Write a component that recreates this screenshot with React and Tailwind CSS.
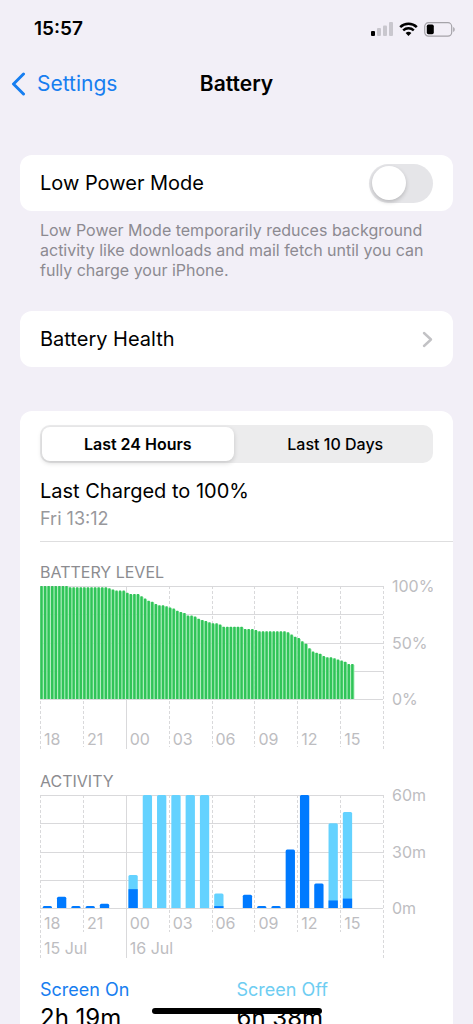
import React, { useState } from 'react';

// battery percentage, one sample every 15 minutes from 18:00
const levels = [
  100, 100, 100, 100, 100, 100, 100, 100, 99, 99, 99, 99, 99, 99, 99, 99, 99, 99, 99, 98, 97, 96, 96, 96,
  94, 93, 93, 93, 91, 89, 87, 86, 84, 83, 83, 82, 81, 80, 78, 77, 76, 74, 74, 73, 71, 70, 69, 68,
  67, 67, 66, 64, 64, 64, 64, 64, 64, 62, 62, 62, 61, 60, 60, 60, 60, 60, 60, 60, 60, 59, 57, 55,
  54, 51, 49, 45, 42, 41, 40, 38, 37, 37, 36, 35, 34, 33, 31, 31,
];

// minutes per hour: [screen on, screen off]
const activity = [
  [1, 0], [6, 0], [1, 0], [1, 0], [2.3, 0], [0, 0], [10, 7.5], [0, 60], [0, 60], [0, 60], [0, 60], [0, 60],
  [1, 6.7], [0, 0], [7, 0], [1, 0], [1, 0], [31, 0], [60, 0], [13, 0], [4, 41], [5, 46],
];

const hours = ['18', '21', '00', '03', '06', '09', '12', '15'];

const PLOT_W = 343;
const PLOT_H = 113;
const TOP = 10;
const BASE = TOP + PLOT_H;
const STEP = PLOT_W / 8;

function Grid({ hourEnd, dayEnd }) {
  return (
    <g stroke="#d9d9db" fill="none">
      {[0, 1, 2, 3, 4].map(i => (
        <line key={i} x1="0" x2={PLOT_W} y1={Math.round(TOP + (PLOT_H * i) / 4) + 0.5} y2={Math.round(TOP + (PLOT_H * i) / 4) + 0.5} />
      ))}
      {[0, 1, 2, 3, 4, 5, 6, 7, 8].map(i => {
        const x = Math.round(i * STEP) + 0.5;
        const edge = i === 0 || i === 2 || i === 8;
        return <line key={i} x1={x} x2={x} y1={TOP} y2={edge ? dayEnd : hourEnd} strokeDasharray={i === 2 ? undefined : '3 2'} />;
      })}
    </g>
  );
}

function AxisText({ labels, hourY }) {
  return (
    <g fill="#bdbdc1">
      {labels.map((l, i) => (
        <text key={l} x="352" y={TOP + 6 + (PLOT_H * i) / 2} fontSize="16">{l}</text>
      ))}
      {hours.map((h, i) => (
        <text key={h} x={i * STEP + 4} y={hourY} fontSize="16">{h}</text>
      ))}
    </g>
  );
}

function LevelChart() {
  const w = PLOT_W / 96;
  return (
    <svg viewBox="0 0 393 174" className="block w-full" role="img" aria-label="Battery level">
      <Grid hourEnd={171} dayEnd={173} />
      {levels.map((v, i) => (
        <g key={i}>
          <rect x={i * w} y={BASE - (v * PLOT_H) / 100 + 1} width={w} height={(v * PLOT_H) / 100 - 1} fill="#a3ecb6" />
          <rect x={i * w + 0.3} y={BASE - (v * PLOT_H) / 100} width={2.4} height={(v * PLOT_H) / 100} rx="0.5" fill="#30c458" />
        </g>
      ))}
      <AxisText labels={['100%', '50%', '0%']} hourY={169} />
    </svg>
  );
}

function ActivityChart() {
  const w = PLOT_W / 24;
  const k = PLOT_H / 60;
  return (
    <svg viewBox="0 0 393 174" className="block w-full" role="img" aria-label="Activity">
      <Grid hourEnd={147} dayEnd={173} />
      {activity.map(([on, off], i) => {
        const h = (on + off) * k;
        const x = i * w + 2.7;
        if (h === 0) return null;
        return (
          <g key={i}>
            <path
              d={`M${x} ${BASE}v${-h + 1.5}q0 -1.5 1.5 -1.5h6.3q1.5 0 1.5 1.5v${h - 1.5}z`}
              fill={off ? '#64d2ff' : '#007aff'}
            />
            {off > 0 && on > 0 && <rect x={x} y={BASE - on * k} width="9.3" height={on * k} fill="#007aff" />}
          </g>
        );
      })}
      <AxisText labels={['60m', '30m', '0m']} hourY={144} />
      <g fill="#bdbdc1" fontSize="16">
        <text x="4" y="169">15 Jul</text>
        <text x={STEP * 2 + 4} y="169">16 Jul</text>
      </g>
    </svg>
  );
}

function StatusBar() {
  return (
    <div className="flex h-14 items-center justify-between pl-[34px] pr-[18px] pt-[2px]">
      <span className="text-[19px] font-semibold">15:57</span>
      <div className="flex items-center gap-[6px]">
        <svg width="22" height="14" viewBox="0 0 22 14">
          <rect x="0" y="9" width="4" height="5" rx="1" fill="#000" />
          <rect x="6" y="6" width="4" height="8" rx="1" fill="#c9c7ce" />
          <rect x="12" y="3.5" width="4" height="10.5" rx="1" fill="#c9c7ce" />
          <rect x="18" y="0" width="4" height="14" rx="1" fill="#c9c7ce" />
        </svg>
        <svg width="19" height="14" viewBox="0 0 19 14" fill="none" stroke="#000">
          <path d="M1.2 5.1a12 12 0 0 1 16.6 0" strokeWidth="2.6" />
          <path d="M4.2 8.4a7.7 7.7 0 0 1 10.6 0" strokeWidth="2.4" />
          <path d="M9.5 14L6.6 11.1a4.2 4.2 0 0 1 5.8 0z" fill="#000" stroke="none" />
        </svg>
        <svg width="31" height="15" viewBox="0 0 31 15">
          <rect x="0.7" y="0.7" width="27" height="13.4" rx="3.8" fill="none" stroke="#a5a3a9" strokeWidth="1.2" />
          <rect x="2.8" y="2.6" width="7" height="9.6" rx="1.6" fill="#000" />
          <path d="M29.2 5v5c1-.4 1.5-1.3 1.5-2.5s-.5-2.1-1.5-2.5z" fill="#a5a3a9" />
        </svg>
      </div>
    </div>
  );
}

export default function App() {
  const [lowPower, setLowPower] = useState(false);
  const [range, setRange] = useState('24h');

  const segment = active =>
    active
      ? 'flex-1 rounded-lg bg-white text-base font-semibold shadow-[0_2px_5px_rgba(0,0,0,0.16)]'
      : 'flex-1 rounded-lg text-base font-medium';

  return (
    <div className="h-screen overflow-y-auto bg-[#f2eff7] font-['Inter',sans-serif] text-black [scrollbar-width:none]">
      <StatusBar />

      <header className="grid h-14 grid-cols-[1fr_auto_1fr] items-center px-[11px]">
        <a href="#settings" className="flex items-center gap-[11px] text-[21px] text-[#177ef0]">
          <svg width="15" height="24" viewBox="0 0 15 24" fill="none" stroke="currentColor" strokeWidth="3" strokeLinecap="round" strokeLinejoin="round">
            <path d="M12.5 2L2.5 12l10 10" />
          </svg>
          Settings
        </a>
        <h1 className="text-[21px] font-semibold">Battery</h1>
      </header>

      <main className="px-5 pt-[43px]">
        <div className="flex h-14 items-center justify-between rounded-xl bg-white px-5">
          <label htmlFor="low-power" className="text-xl">Low Power Mode</label>
          <input
            id="low-power"
            type="checkbox"
            role="switch"
            checked={lowPower}
            onChange={e => setLowPower(e.target.checked)}
            className="flex h-[39px] w-16 appearance-none items-center rounded-full bg-[#e5e5e8] px-[3px] before:size-[34px] before:rounded-full before:bg-white before:shadow-[0_2px_4px_rgba(0,0,0,0.2)] checked:justify-end checked:bg-[#34c759]"
          />
        </div>
        <p className="px-5 pt-[9px] text-base leading-5 text-[#8c8a91]">
          Low Power Mode temporarily reduces background activity like downloads and mail fetch until you can fully charge your iPhone.
        </p>

        <a href="#health" className="mt-[31px] flex h-14 items-center justify-between rounded-xl bg-white px-5 text-xl">
          Battery Health
          <svg width="11" height="17" viewBox="0 0 11 17" fill="none" stroke="#c2c2c5" strokeWidth="2.4" strokeLinecap="round" strokeLinejoin="round">
            <path d="M2 2l7 6.5-7 6.5" />
          </svg>
        </a>

        <section className="mt-11 rounded-t-xl bg-white pl-5 pt-[14px]">
          <div className="mr-5 flex h-[38px] gap-[6px] rounded-[10px] bg-[#ececed] p-[2px]">
            <button type="button" onClick={() => setRange('24h')} className={segment(range === '24h')}>Last 24 Hours</button>
            <button type="button" onClick={() => setRange('10d')} className={segment(range === '10d')}>Last 10 Days</button>
          </div>

          <div className="border-b border-[#dededf] pb-2 pt-[14px]">
            <p className="text-xl">Last Charged to 100%</p>
            <p className="text-lg text-[#98989c]">Fri 13:12</p>
          </div>

          <div className="mr-5 pt-5">
            <h2 className="h-[14px] text-base leading-5 text-[#8c8c90]">BATTERY LEVEL</h2>
            <LevelChart />
          </div>
          <div className="mr-5 pt-[21px]">
            <h2 className="h-[14px] text-base leading-5 text-[#8c8c90]">ACTIVITY</h2>
            <ActivityChart />
          </div>

          <div className="mr-5 grid grid-cols-2 pb-10 pt-[19px]">
            <div>
              <p className="text-lg leading-6 text-[#177ef0]">Screen On</p>
              <p className="text-2xl">2h 19m</p>
            </div>
            <div>
              <p className="text-lg leading-6 text-[#6ecdf2]">Screen Off</p>
              <p className="text-2xl">6h 38m</p>
            </div>
          </div>
        </section>
      </main>

      {/* Home indicator */}
      <div className="fixed bottom-[10px] left-1/2 h-[6px] w-[170px] -translate-x-1/2 rounded-full bg-black" />
    </div>
  );
}
